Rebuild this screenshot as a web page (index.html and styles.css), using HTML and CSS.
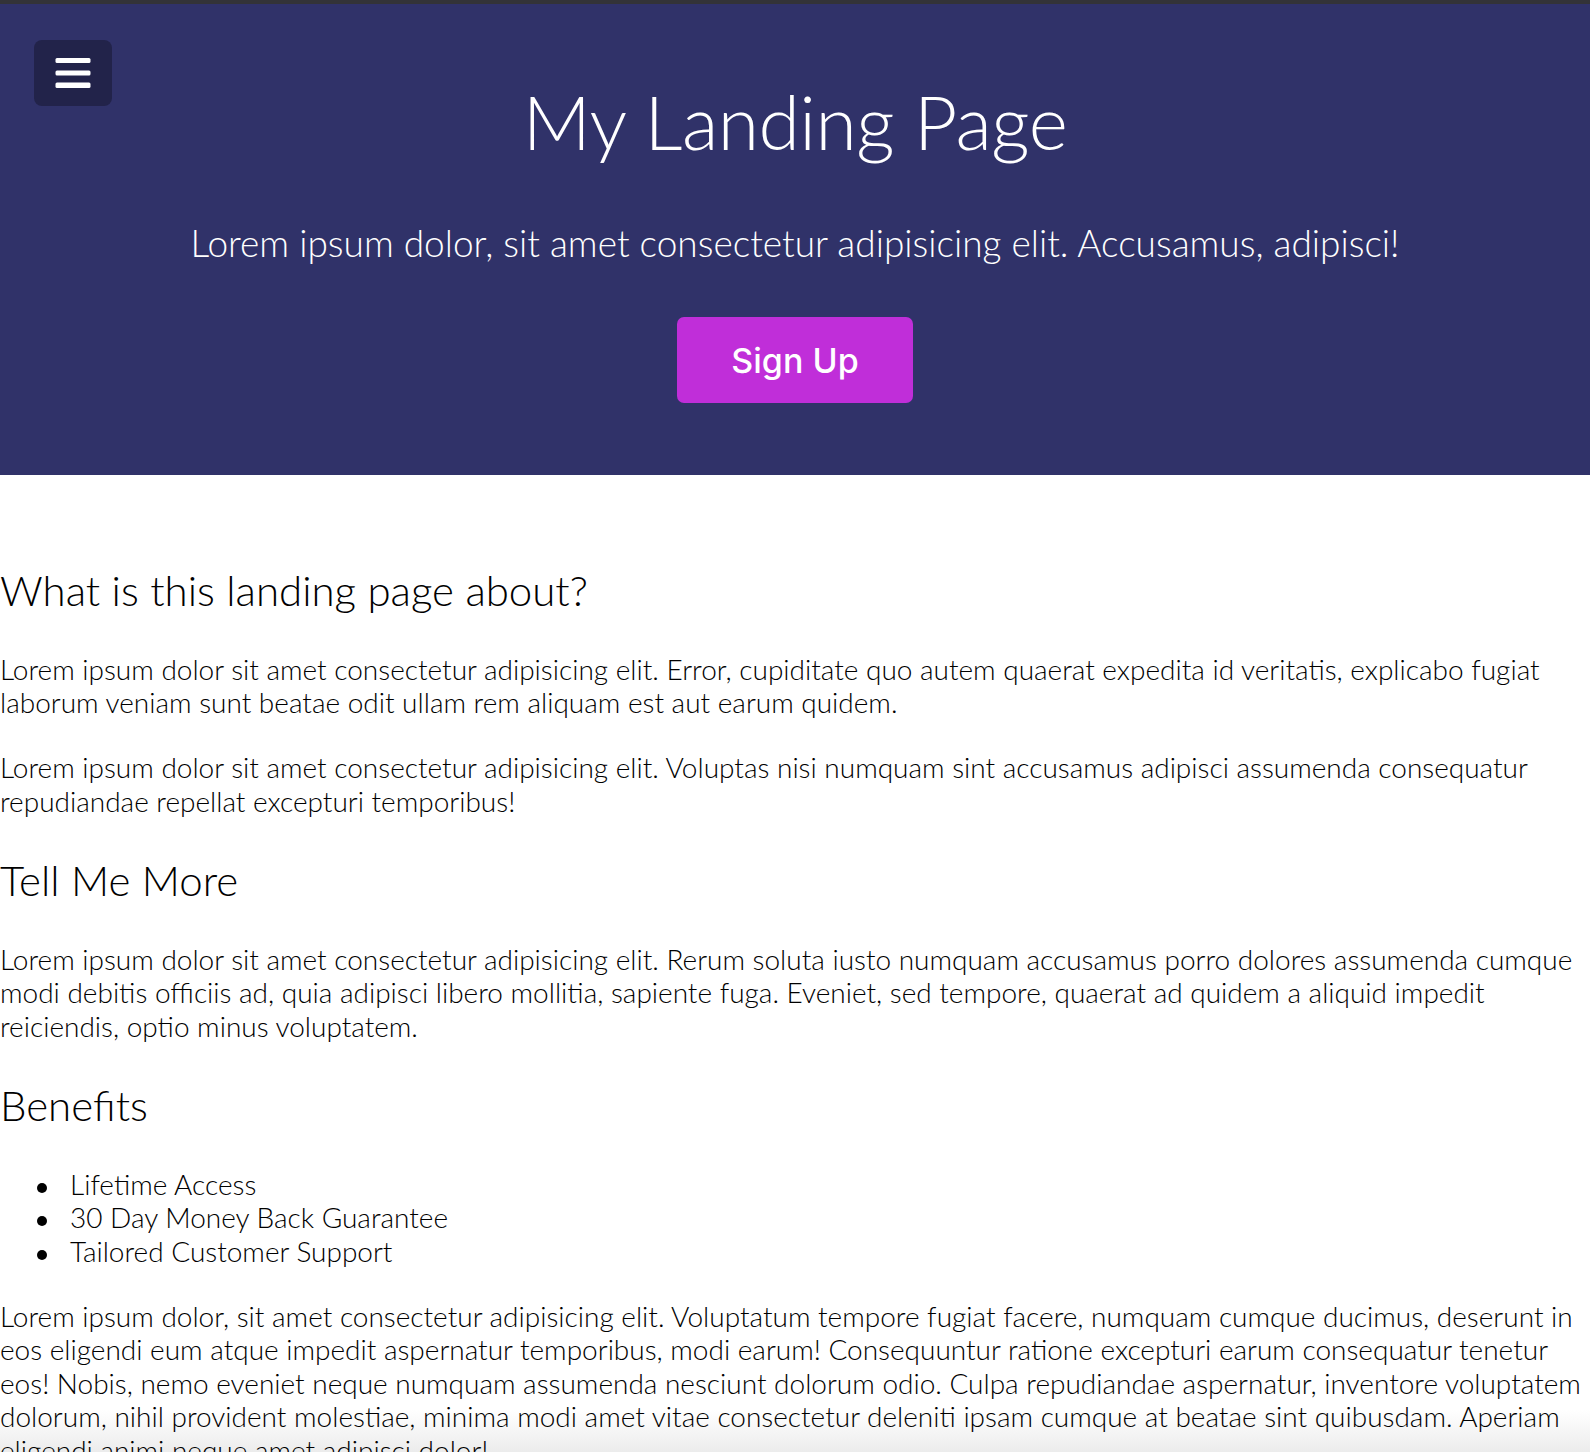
FILE: index.html
```html
<!DOCTYPE html>
<html lang="en">
<head>
<meta charset="utf-8">
<title>My Landing Page</title>
<link rel="stylesheet" href="styles.css">
</head>
<body>
<header class="hero">
  <button class="menu-toggle" aria-label="Menu">
    <svg width="36" height="36" viewBox="0 0 36 36" aria-hidden="true">
      <rect x="0.5" y="3" width="35" height="5" rx="1.5" fill="#fff"/>
      <rect x="0.5" y="15.5" width="35" height="5" rx="1.5" fill="#fff"/>
      <rect x="0.5" y="27.5" width="35" height="5.5" rx="1.5" fill="#fff"/>
    </svg>
  </button>
  <h1 class="hero-title">My Landing Page</h1>
  <p class="hero-sub">Lorem ipsum dolor, sit amet consectetur adipisicing elit. Accusamus, adipisci!</p>
  <a class="signup" href="#">Sign Up</a>
</header>
<main class="content">
  <h2>What is this landing page about?</h2>
  <p>Lorem ipsum dolor sit amet consectetur adipisicing elit. Error, cupiditate quo autem quaerat expedita id veritatis, explicabo fugiat laborum veniam sunt beatae odit ullam rem aliquam est aut earum quidem.</p>
  <p>Lorem ipsum dolor sit amet consectetur adipisicing elit. Voluptas nisi numquam sint accusamus adipisci assumenda consequatur repudiandae repellat excepturi temporibus!</p>
  <h2>Tell Me More</h2>
  <p>Lorem ipsum dolor sit amet consectetur adipisicing elit. Rerum soluta iusto numquam accusamus porro dolores assumenda cumque modi debitis officiis ad, quia adipisci libero mollitia, sapiente fuga. Eveniet, sed tempore, quaerat ad quidem a aliquid impedit reiciendis, optio minus voluptatem.</p>
  <h2>Benefits</h2>
  <ul class="benefits">
    <li>Lifetime Access</li>
    <li>30 Day Money Back Guarantee</li>
    <li>Tailored Customer Support</li>
  </ul>
  <p>Lorem ipsum dolor, sit amet consectetur adipisicing elit. Voluptatum tempore fugiat facere, numquam cumque ducimus, deserunt in eos eligendi eum atque impedit aspernatur temporibus, modi earum! Consequuntur ratione excepturi earum consequatur tenetur eos! Nobis, nemo eveniet neque numquam assumenda nesciunt dolorum odio. Culpa repudiandae aspernatur, inventore voluptatem dolorum, nihil provident molestiae, minima modi amet vitae consectetur deleniti ipsam cumque at beatae sint quibusdam. Aperiam eligendi animi neque amet adipisci dolor!</p>
</main>
</body>
</html>
```

FILE: styles.css
```css
html {
  margin: 0;
  padding: 0;
  background:
    linear-gradient(to bottom, rgba(238,238,238,0), #ececec) left bottom / 100% 42px no-repeat fixed,
    #fff;
}

body {
  margin: 0;
  padding: 0;
  font-family: "Lato", "Liberation Sans", sans-serif;
  font-weight: 300;
  font-size: 28px;
  color: #000;
  border-top: 4px solid #333338;
}

.hero {
  position: relative;
  background: #303269;
  color: #fff;
  display: flex;
  flex-direction: column;
  align-items: center;
  padding: 72px 0 72px;
}

.menu-toggle {
  position: absolute;
  top: 36px;
  left: 34px;
  width: 78px;
  height: 66px;
  border: none;
  border-radius: 8px;
  background: #22234a;
  display: flex;
  align-items: center;
  justify-content: center;
  padding: 0;
  cursor: pointer;
}

.menu-toggle svg {
  display: block;
  height: 36px;
  width: 36px;
}

.hero-title {
  font-weight: 300;
  font-size: 75px;
  letter-spacing: -0.5px;
  line-height: 1.2;
  margin: 0;
}

.hero-sub {
  font-size: 37px;
  line-height: 1.2;
  margin: 55px 0 52px;
}

.signup {
  display: flex;
  align-items: center;
  justify-content: center;
  width: 236px;
  height: 86px;
  border-radius: 7px;
  background: #c02ed9;
  color: #fff;
  text-decoration: none;
  font-family: "Inter", "Roboto", sans-serif;
  font-weight: 500;
  font-size: 34px;
}

.content {
  padding-top: 53px;
}

.content h2 {
  font-weight: 300;
  font-size: 42px;
  line-height: 1.2;
  margin: 37px 0;
}

.content p {
  line-height: 1.2;
  margin: 31px 0;
}

.benefits {
  list-style: none;
  margin: 31px 0;
  padding-left: 70px;
  line-height: 1.2;
}

.benefits li {
  position: relative;
}

.benefits li::before {
  content: "";
  position: absolute;
  left: -33px;
  top: 15px;
  width: 10px;
  height: 10px;
  border-radius: 50%;
  background: #000;
}
```
